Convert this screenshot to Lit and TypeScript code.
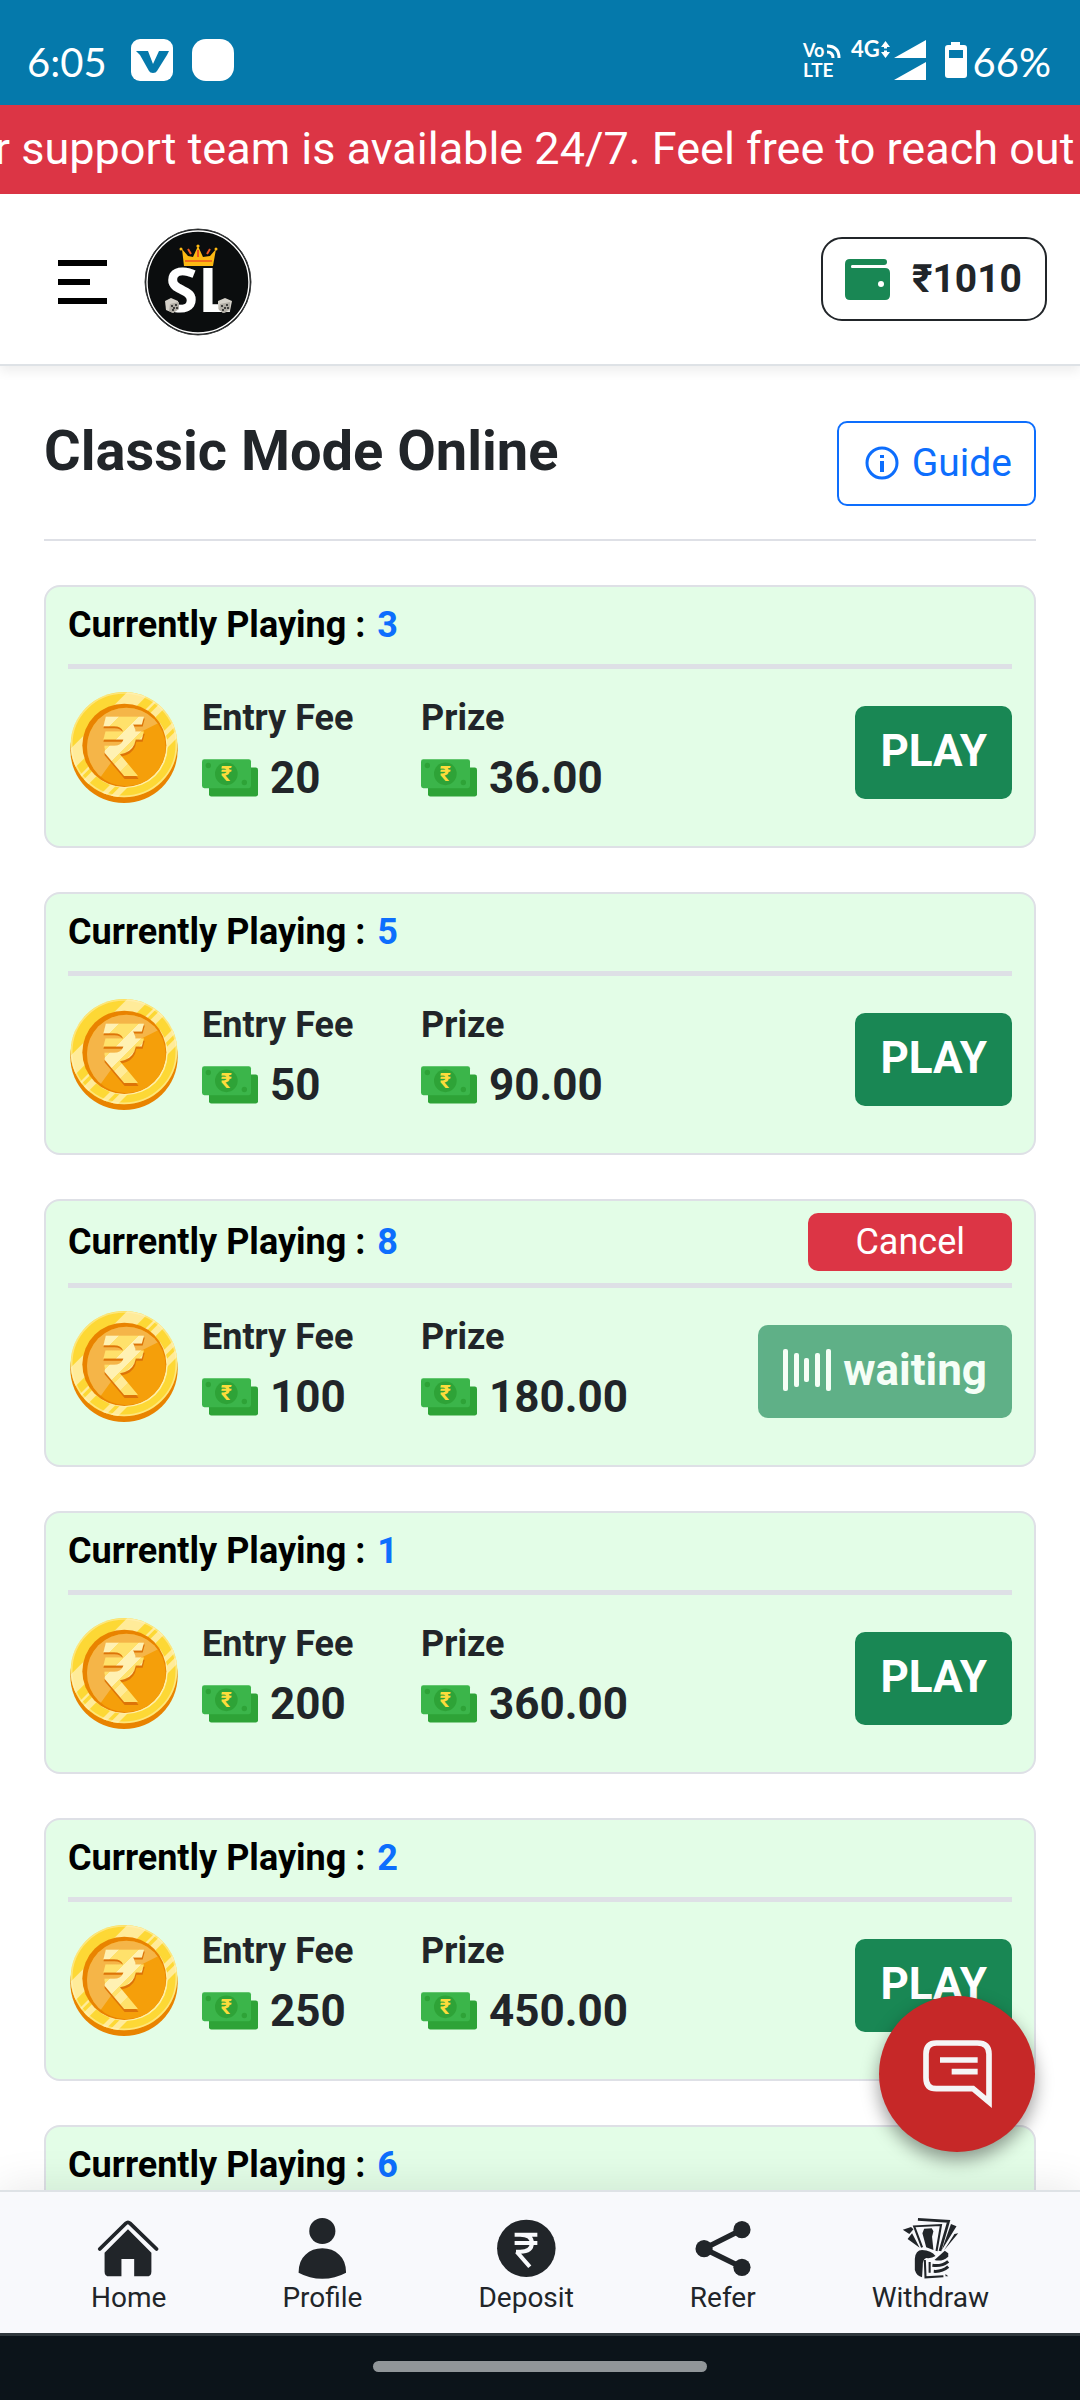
import { LitElement, html, css, svg, nothing } from "lit";
import { customElement, property } from "lit/decorators.js";

interface Table {
  playing: number;
  fee?: string;
  prize?: string;
  waiting?: boolean;
}

const TABLES: Table[] = [
  { playing: 3, fee: "20", prize: "36.00" },
  { playing: 5, fee: "50", prize: "90.00" },
  { playing: 8, fee: "100", prize: "180.00", waiting: true },
  { playing: 1, fee: "200", prize: "360.00" },
  { playing: 2, fee: "250", prize: "450.00" },
  { playing: 6 },
];

const coinIcon = html`
  <svg class="coin" viewBox="34 63 322 333" aria-hidden="true">
    <defs>
      <clipPath id="rim"><ellipse cx="195" cy="221" rx="160" ry="158" /></clipPath>
      <clipPath id="face"><ellipse cx="202" cy="228" rx="118" ry="118" /></clipPath>
      <linearGradient id="shine" gradientUnits="userSpaceOnUse" x1="120" y1="140" x2="260" y2="280">
        <stop offset="0" stop-color="#fff1b3" />
        <stop offset=".2" stop-color="#fff1b3" />
        <stop offset=".2" stop-color="#ffe16b" />
        <stop offset=".42" stop-color="#ffe16b" />
        <stop offset=".42" stop-color="#fff1b3" />
        <stop offset=".6" stop-color="#fff1b3" />
        <stop offset=".6" stop-color="#ffe16b" />
        <stop offset=".66" stop-color="#ffe16b" />
        <stop offset=".66" stop-color="#ffeb99" />
        <stop offset=".8" stop-color="#ffeb99" />
        <stop offset=".8" stop-color="#ffe16b" />
      </linearGradient>
    </defs>
    <ellipse cx="195" cy="237" rx="161" ry="159" fill="#e98300" />
    <ellipse cx="195" cy="221" rx="160" ry="158" fill="#fdd835" />
    <g clip-path="url(#rim)" fill="#ffeb99">
      <path d="M233 35 L303 35 L0 338 L0 268Z" />
      <path d="M355 20 L365 20 L0 385 L0 375Z" />
      <path d="M380 20 L408 20 L0 428 L0 400Z" />
      <path d="M455 40 L475 40 L75 440 L55 440Z" />
      <path d="M400 130 L425 130 L115 440 L90 440Z" />
    </g>
    <ellipse cx="195" cy="221" rx="157" ry="155" fill="none" stroke="#fff3c0" stroke-width="5" opacity=".5" />
    <ellipse cx="200" cy="227" rx="126" ry="124" fill="#fff0a8" />
    <ellipse cx="196" cy="223" rx="126" ry="125" fill="#e98300" />
    <ellipse cx="202" cy="228" rx="118" ry="118" fill="#f59f0a" />
    <path clip-path="url(#face)" d="M60 100 L330 100 L330 140 L210 200 L120 325 L60 330Z" fill="#f5b548" />
    <text class="rupee" x="128" y="323" font-size="255" fill="#dd7408">₹</text>
    <text class="rupee" x="128" y="315" font-size="250" fill="url(#shine)">₹</text>
  </svg>
`;

const cashIcon = html`
  <svg class="cash" viewBox="429 270 168 113" aria-hidden="true">
    <rect x="450" y="295" width="147" height="87" rx="7" fill="#2ea337" />
    <rect x="429" y="270" width="147" height="87" rx="7" fill="#3bb54a" />
    <circle cx="502" cy="314" r="34" fill="#2ea337" />
    <circle cx="448" cy="289" r="8" fill="#2ea337" />
    <circle cx="556" cy="340" r="8" fill="#2ea337" />
    <text class="rupee" x="485" y="337" font-size="63" fill="#fddc3c">₹</text>
  </svg>
`;

const waitingIcon = html`
  <svg class="bars" viewBox="0 0 48 42" aria-hidden="true" fill="currentColor">
    <rect x="0" y="0" width="5" height="42" rx="2" />
    <rect x="11" y="4" width="5" height="34" rx="2" />
    <rect x="21" y="9" width="5" height="24" rx="2" />
    <rect x="32" y="4" width="5" height="34" rx="2" />
    <rect x="43" y="0" width="5" height="42" rx="2" />
  </svg>
`;

const logo = html`
  <svg class="logo" viewBox="144 228 108 108" role="img" aria-label="SL">
    <circle cx="198" cy="282" r="53" fill="#0b0d0e" stroke="#3a3c3d" stroke-width="1" />
    <circle cx="198" cy="282" r="51" fill="none" stroke="#fff" stroke-width="1.4" />
    <text class="mark" x="165" y="312" font-size="60">SL</text>
    <path d="M182 249 L188 256 L193 257 L198 246 L203 257 L210 256 L216 249 L213 266 L184 266Z" fill="#fdb913" stroke="#0b0d0e" stroke-width="2" paint-order="stroke" />
    <path d="M185 261 H212" stroke="#f26a1b" stroke-width="2" />
    <path d="M188 249 l3 5 M210 249 l-3 5 M198 250 v7" stroke="#f0591f" stroke-width="2" />
    <circle cx="181" cy="249" r="1.5" fill="#fdb913" /><circle cx="216" cy="249" r="1.5" fill="#fdb913" /><circle cx="198" cy="246" r="1.6" fill="#fdb913" />
    <g fill="#d5d1c9">
      <path d="M165 301 L171 298 L178 301 L179 309 L173 313 L166 310Z" />
      <path d="M170 304 L179 302 L179 309 L173 313 L169 311Z" fill="#b1ada5" />
      <path d="M232 301 L225 298 L218 301 L218 309 L223 313 L230 311Z" />
      <path d="M220 304 L230 302 L230 309 L224 313 L219 310Z" fill="#b1ada5" />
    </g>
    <g fill="#1c1c1c">
      <circle cx="172" cy="306" r="1" /><circle cx="176" cy="305" r="1" /><circle cx="174" cy="308" r="1" /><circle cx="173" cy="310" r="1" /><circle cx="177" cy="308" r="1" />
      <circle cx="222" cy="306" r="1" /><circle cx="227" cy="305" r="1" /><circle cx="225" cy="308" r="1" /><circle cx="223" cy="310" r="1" /><circle cx="228" cy="308" r="1" />
    </g>
  </svg>
`;

const NAV = [
  {
    label: "Home",
    box: "283 141 183 189",
    art: svg`
      <path d="M291 237 L367 160 Q373 154 379 160 L456 237" fill="none" stroke="currentColor" stroke-width="11" stroke-linecap="round" stroke-linejoin="round" />
      <path d="M373 178 L441 248 V305 Q441 319 427 319 H391 V267 H354 V319 H319 Q305 319 305 305 V248Z" />`,
  },
  {
    label: "Profile",
    box: "842 141 183 189",
    art: svg`
      <ellipse cx="933" cy="183" rx="38" ry="39" />
      <path d="M864 308 Q864 272 884 254 Q904 235 933 235 Q962 235 982 254 Q1002 272 1002 308 Q970 326 933 326 Q896 326 864 308Z" />`,
  },
  {
    label: "Deposit",
    box: "1433 141 183 189",
    art: svg`
      <ellipse cx="1524" cy="235" rx="85" ry="86" />
      <path d="M1490 194 H1556 M1490 219 H1556 M1506 194 Q1540 194 1540 219 Q1540 245 1506 245 H1494 M1496 245 L1534 290" fill="none" stroke="#f8f9fc" stroke-width="12" />`,
  },
  {
    label: "Refer",
    box: "437 141 183 189",
    art: svg`
      <path d="M585 179 L475 236 L585 292" fill="none" stroke="currentColor" stroke-width="16" />
      <ellipse cx="585" cy="179" rx="25" ry="26" /><ellipse cx="475" cy="236" rx="25" ry="26" /><ellipse cx="585" cy="292" rx="25" ry="26" />`,
  },
  {
    label: "Withdraw",
    box: "1041 141 183 189",
    art: svg`
      <g fill="none" stroke="currentColor" stroke-width="6">
        <path d="M1096 148 L1185 154 L1160 243" stroke-width="8" />
        <path d="M1108 232 L1085 169 L1163 165 L1150 243" />
        <path d="M1116 270 L1118 322 L1170 319 M1130 276 V308" />
      </g>
      <path d="M1109 190 L1114 176 L1136 175 L1141 184 L1137 200 L1141 240 L1120 232Z" />
      <path d="M1052 179 L1076 171 L1083 178 L1071 192Z M1079 190 L1101 233 L1066 207Z" />
      <path d="M1192 162 L1208 169 L1165 241Z M1202 192 L1213 190 L1172 241Z" />
      <path d="M1087 266 Q1089 240 1108 240 Q1135 242 1147 258 Q1136 266 1120 264 Q1109 268 1110 288 L1108 322 Q1092 318 1087 300Z" />
      <path d="M1144 270 L1174 242 L1184 250 V260 Q1166 276 1144 270Z" />
      <g fill="none" stroke="currentColor" stroke-width="9">
        <path d="M1138 286 Q1165 290 1184 274" /><path d="M1142 304 Q1166 306 1184 290" />
      </g>
      <path d="M1176 312 L1184 319 H1176Z" />`,
  },
];

@customElement("game-card")
export class GameCard extends LitElement {
  @property({ attribute: false }) table!: Table;

  static styles = css`
    :host { display: block; }
    .card {
      background: #e3fde7;
      border: 2px solid #dee0e6;
      border-radius: 16px;
      padding: 0 22px;
    }
    .head {
      display: flex;
      align-items: center;
      justify-content: space-between;
      padding: 12px 0;
      border-bottom: 5px solid #dee0e6;
    }
    .playing {
      margin: 0;
      padding-bottom: 1px;
      font-size: 36px;
      line-height: 52px;
      font-weight: 700;
      color: #000;
    }
    .count { color: #0d6efd; margin-left: 3px; }
    .body {
      display: flex;
      align-items: center;
      padding: 23px 0 34px;
    }
    .coin {
      width: 108px;
      height: 111px;
      margin: 0 24px 0 2px;
      align-self: flex-start;
    }
    .stats {
      flex: 1;
      display: grid;
      grid-template-columns: 219px 1fr;
      margin: 0;
    }
    .label {
      font-size: 36px;
      line-height: 52px;
      font-weight: 700;
    }
    .value {
      display: flex;
      align-items: center;
      gap: 12px;
      margin: 0;
      font-size: 44px;
      line-height: 68px;
      font-weight: 700;
    }
    .cash { width: 56px; height: 38px; }
    .rupee { font-family: Roboto, sans-serif; font-weight: 700; }
    button {
      font-family: inherit;
      border: 0;
      border-radius: 10px;
      color: #fff;
    }
    .action {
      display: flex;
      align-items: center;
      gap: 12px;
      padding: 12px 25px 14px;
      background: #198754;
      font-size: 44px;
      line-height: 67px;
      font-weight: 700;
    }
    .action:disabled { opacity: 0.65; }
    .cancel {
      padding: 0 47px;
      background: #dc3545;
      font-size: 36px;
      line-height: 58px;
    }
    .bars { width: 48px; height: 42px; }
  `;

  private renderBody(t: Table) {
    return html`
      <div class="body">
        ${coinIcon}
        <dl class="stats">
          <div>
            <dt class="label">Entry Fee</dt>
            <dd class="value">${cashIcon}${t.fee}</dd>
          </div>
          <div>
            <dt class="label">Prize</dt>
            <dd class="value">${cashIcon}${t.prize}</dd>
          </div>
        </dl>
        ${t.waiting
          ? html`<button class="action" type="button" disabled>${waitingIcon}waiting</button>`
          : html`<button class="action" type="button">PLAY</button>`}
      </div>
    `;
  }

  render() {
    const t = this.table;
    return html`
      <article class="card">
        <div class="head">
          <h2 class="playing">Currently Playing : <span class="count">${t.playing}</span></h2>
          ${t.waiting ? html`<button class="cancel" type="button">Cancel</button>` : nothing}
        </div>
        ${t.fee ? this.renderBody(t) : nothing}
      </article>
    `;
  }
}

@customElement("app-root")
export class AppRoot extends LitElement {
  static styles = css`
    :host {
      display: flex;
      flex-direction: column;
      height: 100vh;
      background: #fff;
      color: #212529;
      font-family: Roboto, "Liberation Sans", sans-serif;
    }
    .status {
      display: flex;
      align-items: center;
      justify-content: space-between;
      padding: 28px 29px 13px 27px;
      background: #0579ab;
      color: #fff;
      font-family: Lato, sans-serif;
      font-size: 40px;
      line-height: 60px;
    }
    .cluster { display: flex; align-items: center; }
    .reading { padding-top: 4px; }
    .apps { width: 104px; height: 42px; margin-left: 23px; }
    .signals { width: 166px; height: 44px; margin-right: 5px; }
    .tiny { font-family: Lato, sans-serif; font-weight: 700; fill: #fff; }
    .ticker {
      overflow: hidden;
      white-space: nowrap;
      padding-bottom: 2px;
      background: #dc3545;
      color: #fff;
      font-size: 45px;
      line-height: 87px;
      text-indent: -61px;
    }
    .bar {
      display: flex;
      align-items: center;
      justify-content: space-between;
      padding: 31px 33px 31px 58px;
      border-bottom: 2px solid #dee2e6;
      box-shadow: 0 5px 11px rgba(0, 0, 0, 0.075);
      position: relative;
    }
    .brand { display: flex; align-items: center; gap: 37px; padding-top: 3px; margin-bottom: -3px; }
    button { font-family: inherit; background: none; border: 0; padding: 0; }
    .menu { width: 49px; height: 44px; }
    .menu svg, .logo { display: block; }
    .logo { width: 108px; height: 108px; }
    .mark { font-family: "Open Sans", sans-serif; font-weight: 700; fill: #fff; }
    .wallet {
      display: flex;
      align-items: center;
      gap: 22px;
      padding: 10px 23px 10px 22px;
      border: 2px solid #212529;
      border-radius: 21px;
      color: inherit;
      text-decoration: none;
      font-size: 39px;
      line-height: 60px;
      font-weight: 700;
    }
    .purse { width: 45px; height: 41px; }
    .view { flex: 1; min-height: 0; position: relative; display: flex; }
    .content { flex: 1; overflow: hidden; padding: 55px 44px 0; }
    .title-row {
      display: flex;
      align-items: flex-start;
      justify-content: space-between;
      padding-bottom: 33px;
      border-bottom: 2px solid #dee0e6;
    }
    h1 { margin: 0; font-size: 56px; line-height: 60px; font-weight: 700; }
    .guide {
      display: flex;
      align-items: center;
      gap: 13px;
      padding: 12px 22px 13px 26px;
      border: 2px solid #0d6efd;
      border-radius: 10px;
      color: #0d6efd;
      font-size: 39px;
      line-height: 56px;
    }
    .info { width: 34px; height: 34px; }
    .list { display: grid; gap: 44px; padding-top: 44px; }
    .chat {
      position: absolute;
      right: 45px;
      bottom: 38px;
      width: 156px;
      height: 156px;
      border-radius: 50%;
      background: #c62828;
      box-shadow: 0 8px 18px rgba(0, 0, 0, 0.4);
    }
    .chat svg { display: block; width: 156px; height: 156px; }
    .tabs {
      display: flex;
      justify-content: space-between;
      padding: 25px 91px 17px;
      background: #f8f9fc;
      border-top: 2px solid #dee2e6;
      box-shadow: 0 0 42px rgba(0, 0, 0, 0.1);
      position: relative;
    }
    .tab {
      display: flex;
      flex-direction: column;
      align-items: center;
      color: #212529;
      text-decoration: none;
      font-size: 28px;
      line-height: 36px;
    }
    .tab svg { width: 63px; height: 63px; fill: currentColor; }
    .gesture {
      display: flex;
      justify-content: center;
      padding: 25px 0 28px;
      background: #0c141a;
      border-top: 3px solid #30383d;
      position: relative;
    }
    .pill { width: 31%; height: 11px; border-radius: 6px; background: #919699; }
  `;

  render() {
    return html`
      <div class="status">
        <div class="cluster">
          <span class="reading">6:05</span>
          <svg class="apps" viewBox="130 39 104 42" aria-hidden="true">
            <rect x="131" y="39" width="42" height="42" rx="9" fill="#fff" />
            <path d="M136 51 H148 L153 64 L159 51 H169 L167 55 L157 71 Q156 73 153 73 Q150 73 149 71 L140 55Z" fill="#0579ab" />
            <rect x="192" y="39" width="42" height="42" rx="14" fill="#fff" />
          </svg>
        </div>
        <div class="cluster">
          <svg class="signals" viewBox="802 38 166 44" fill="#fff" aria-label="VoLTE, 4G, battery">
            <text class="tiny" x="803" y="57" font-size="18">Vo</text>
            <text class="tiny" x="803" y="77" font-size="19">LTE</text>
            <path d="M827 46 Q839 46 839 58 M827 52 Q833 52 833 58" fill="none" stroke="#fff" stroke-width="3" />
            <text class="tiny" x="851" y="57" font-size="22">4G</text>
            <path d="M885.500 41 L890 47 H887 V52 H890 L885.500 58 L881 52 H884 V47 H881Z" />
            <path d="M881 49.500 H890" stroke="#0579ab" stroke-width="2" />
            <path d="M926 40 V58 H894Z M926 62 V80 H894Z" />
            <path d="M951 42 H960 V45 H964 Q967 45 967 48 V75 Q967 78 964 78 H948 Q945 78 945 75 V48 Q945 45 948 45 H951Z" />
            <rect x="949" y="50" width="14" height="8" fill="#0579ab" />
          </svg>
          <span class="reading">66%</span>
        </div>
      </div>

      <div class="ticker">Our support team is available 24/7. Feel free to reach out to</div>

      <header class="bar">
        <div class="brand">
          <button class="menu" type="button" aria-label="Menu">
            <svg viewBox="0 0 49 44"><path d="M0 0 H49 V6 H0Z M0 19 H32 V25 H0Z M0 38 H49 V44 H0Z" /></svg>
          </button>
          ${logo}
        </div>
        <a class="wallet" href="#wallet">
          <svg class="purse" viewBox="0 0 45 41" aria-hidden="true">
            <path d="M5 0 H39 Q42 0 42 3 Q42 6 39 6 H7 Q6 6 6 7.500 Q6 9 7 9 H40 Q45 9 45 14 V36 Q45 41 40 41 H5 Q0 41 0 36 V5 Q0 0 5 0Z" fill="#198754" />
            <circle cx="36" cy="25" r="3" fill="#fff" />
          </svg>
          <span>₹1010</span>
        </a>
      </header>

      <div class="view">
        <main class="content">
          <div class="title-row">
            <h1>Classic Mode Online</h1>
            <button class="guide" type="button">
              <svg class="info" viewBox="0 0 34 34" aria-hidden="true">
                <circle cx="17" cy="17" r="15" fill="none" stroke="currentColor" stroke-width="3" />
                <path d="M15 9 H19 V12 H15Z M15 15 H19 V26 H15Z" fill="currentColor" />
              </svg>
              <span>Guide</span>
            </button>
          </div>
          <div class="list">${TABLES.map((t) => html`<game-card .table=${t}></game-card>`)}</div>
        </main>
        <button class="chat" type="button" aria-label="Chat">
          <svg viewBox="537 288 468 468">
            <path d="M709 429 H832 Q867 429 867 462 V606 L819 566 H709 Q678 566 678 533 V462 Q678 429 709 429Z" fill="none" stroke="#f5f5f6" stroke-width="17" />
            <path d="M720 480 H833 M755 515 H833" stroke="#f5f5f6" stroke-width="17" />
          </svg>
        </button>
      </div>

      <nav class="tabs">
        ${NAV.map(
          (n) => html`
            <a class="tab" href="#${n.label.toLowerCase()}">
              <svg viewBox=${n.box} preserveAspectRatio="none" aria-hidden="true">${n.art}</svg>
              <span>${n.label}</span>
            </a>
          `,
        )}
      </nav>
      <div class="gesture"><div class="pill"></div></div>
    `;
  }
}
